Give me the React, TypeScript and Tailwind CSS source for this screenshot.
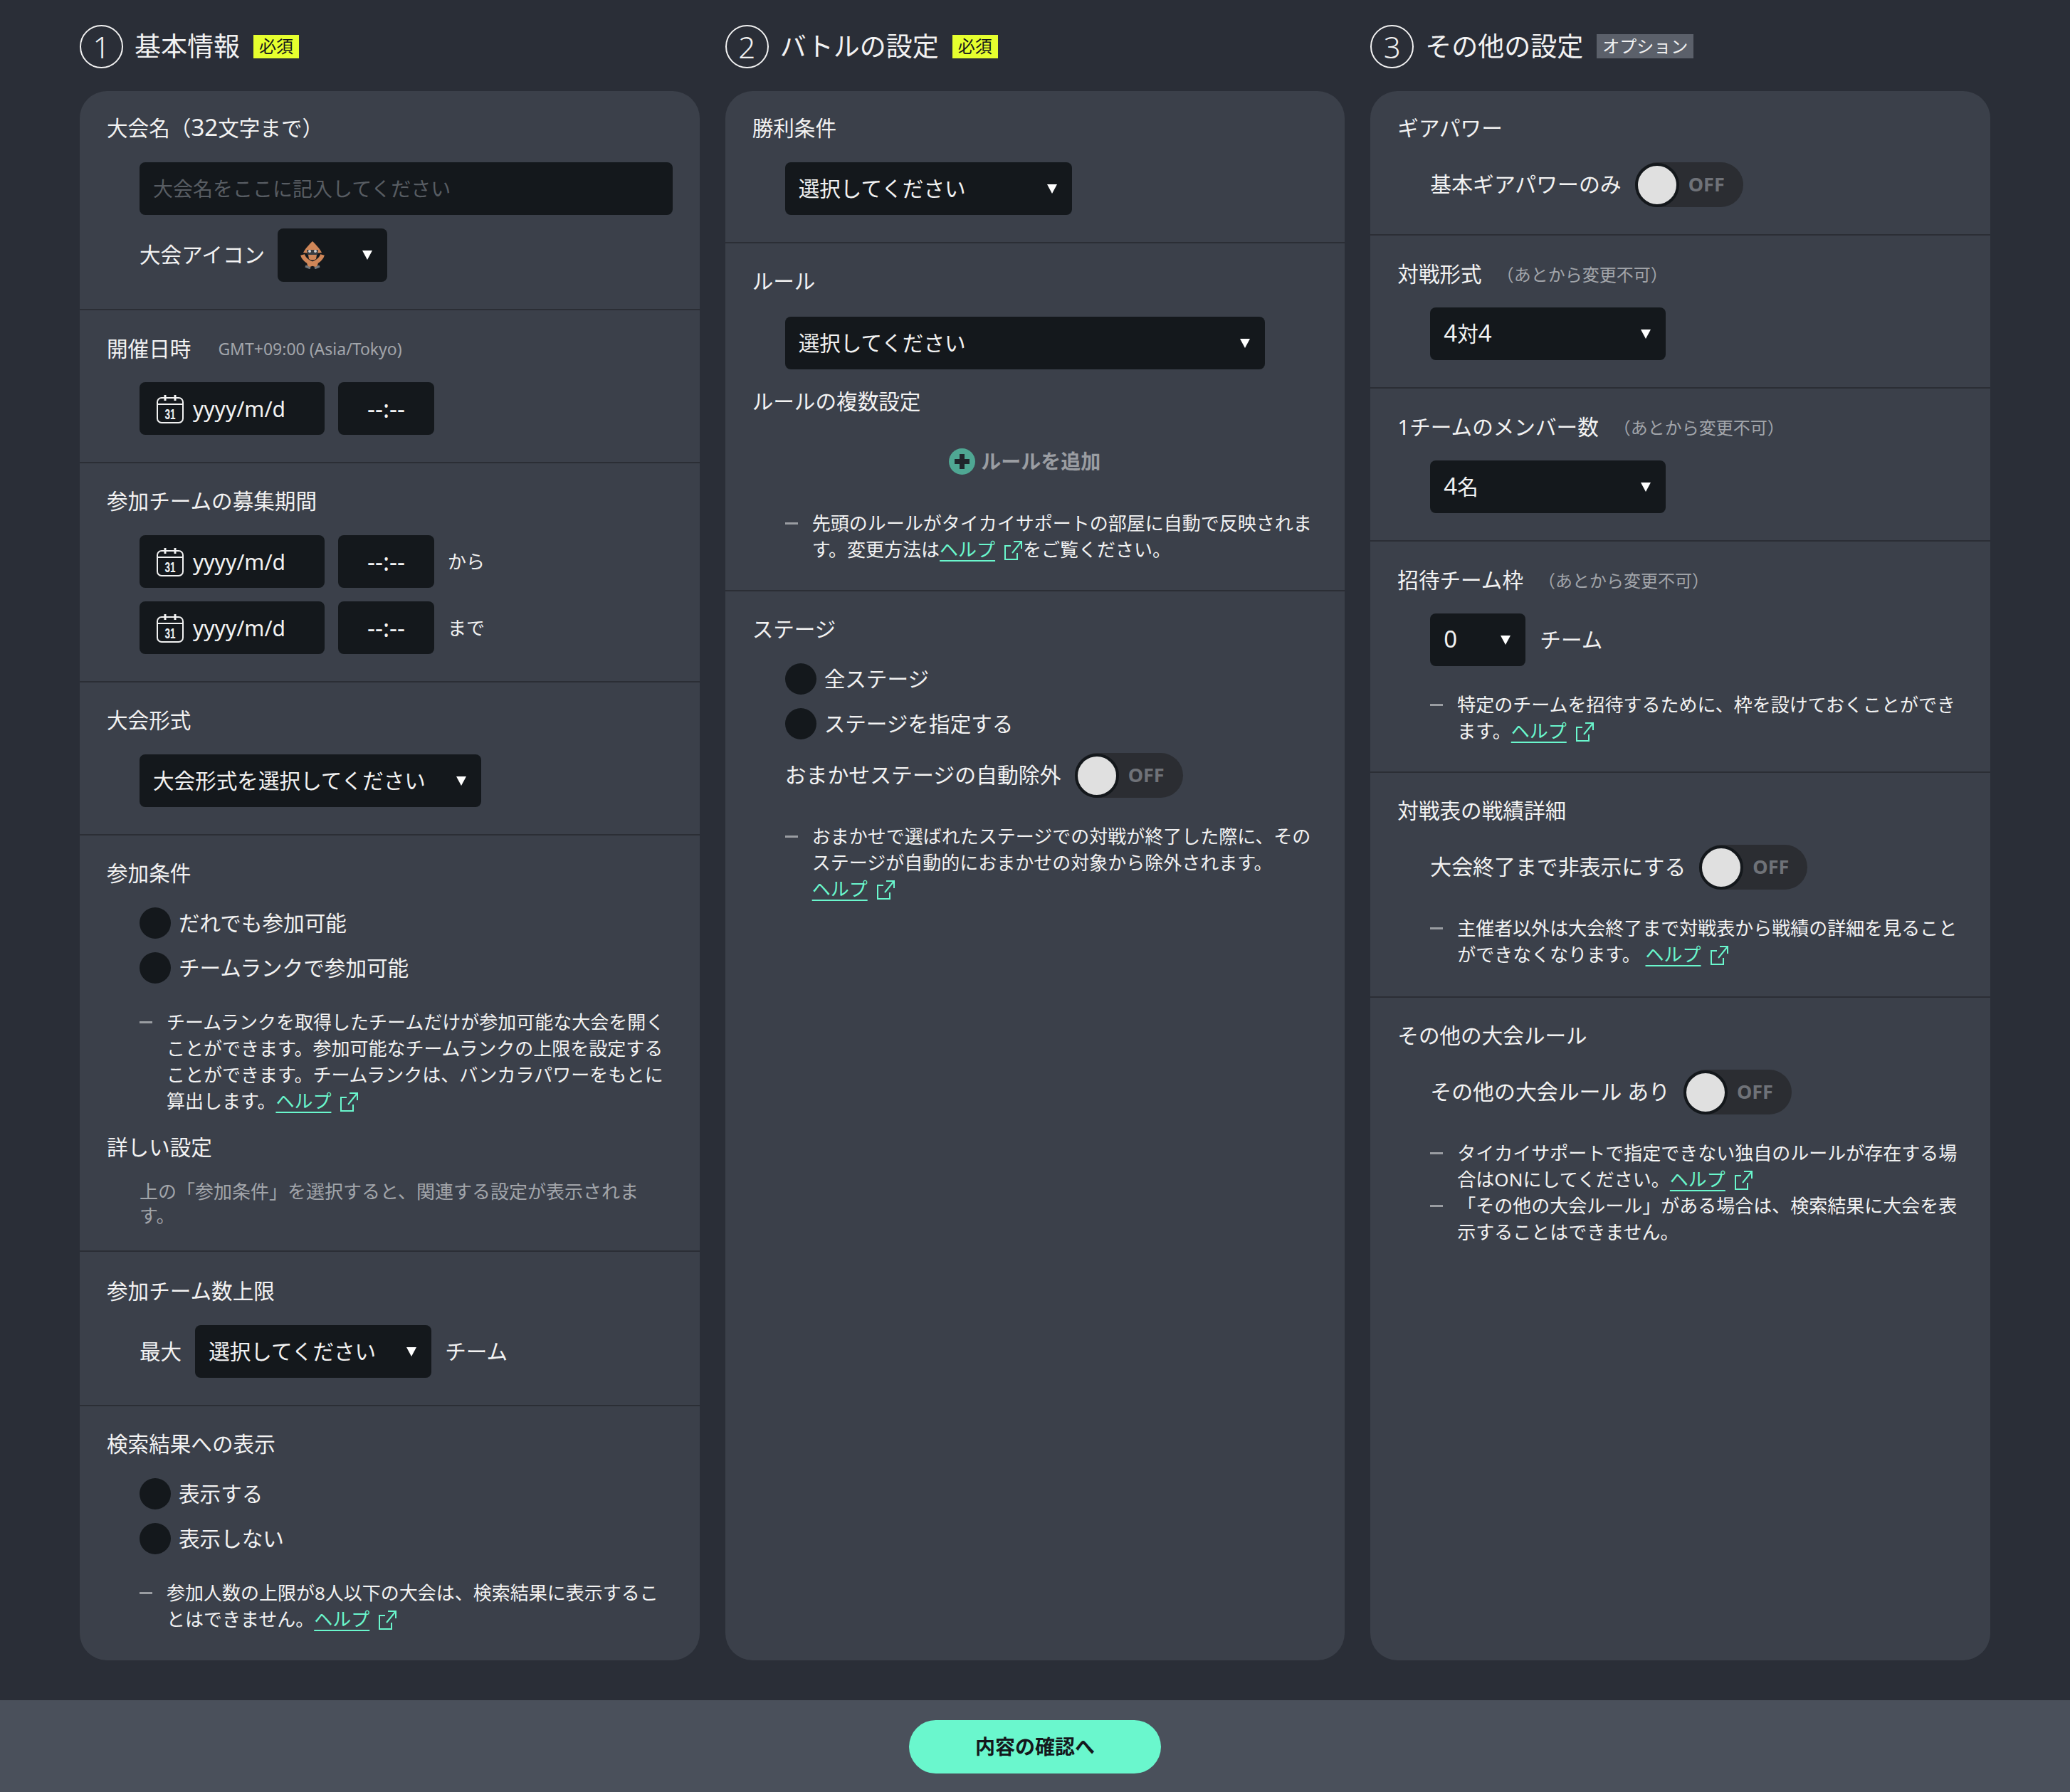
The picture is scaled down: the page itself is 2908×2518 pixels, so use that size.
import type { ReactNode } from "react";

const Heading = ({ children, sub }: { children: ReactNode; sub?: ReactNode }) => (
  <div className={`flex h-[48px] items-center text-[29.6px] text-[#f2f2f2] ${sub ? "pt-[3px]" : ""}`}>
    <span>{children}</span>
    {sub}
  </div>
);

const Fixed = () => <span className="ml-[21px] text-[24px] text-[#a2a5aa]">（あとから変更不可）</span>;

const Section = ({ children, className = "pb-[38px]" }: { children: ReactNode; className?: string }) => (
  <section className={`border-b-2 border-[#2b2e35] pl-[38px] pr-[38px] pt-[29px] first:pt-[28px] last:border-b-0 ${className}`}>
    {children}
  </section>
);

const Body = ({ children }: { children: ReactNode }) => (
  <div className="ml-[46px] mt-[24px] flex flex-col items-start gap-[19px]">{children}</div>
);

const Arrow = () => (
  <svg width="14" height="13" viewBox="0 0 14 13" className="shrink-0">
    <polygon points="0,0 14,0 7,13" fill="#ffffff" />
  </svg>
);

const Num = ({ children }: { children: ReactNode }) => <span className="text-[33px] leading-none">{children}</span>;

const Select = ({ label, width }: { label: ReactNode; width: string }) => (
  <div className={`flex h-[74px] items-center justify-between rounded-[8px] bg-[#14181c] pl-[19px] pr-[21px] text-[29.6px] text-[#f2f2f2] ${width}`}>
    <span>{label}</span>
    <Arrow />
  </div>
);

const Squid = () => (
  <svg width="34" height="39" viewBox="0 0 34 39" fill="none">
    <path d="M3 19 Q6 29 24 34" stroke="#cf8658" strokeWidth="6" />
    <path d="M31 19 Q28 29 10 34" stroke="#cf8658" strokeWidth="6" />
    <path d="M7 35 L14 38 M27 35 L20 38" stroke="#74777c" strokeWidth="3" />
    <path d="M17 0 C21 4 27 10 30 16 L21 17 L13 17 L4 16 C7 10 13 4 17 0 Z" fill="#cf8658" />
    <path d="M9 12 H25 L24 19 H10 Z" fill="#3a3d42" />
    <circle cx="13" cy="14" r="2" fill="#cfd1d4" />
    <circle cx="21" cy="14" r="2" fill="#cfd1d4" />
    <path d="M11 19 H23 L22 25 Q17 28 12 25 Z" fill="#cf8658" />
  </svg>
);

const IconSelect = () => (
  <div className="flex items-center gap-[18px]">
    <span className="text-[29.6px] text-[#f2f2f2]">大会アイコン</span>
    <div className="flex h-[75px] w-[154px] items-center justify-between rounded-[8px] bg-[#14181c] pl-[32px] pr-[21px]">
      <Squid />
      <Arrow />
    </div>
  </div>
);

const Calendar = () => (
  <svg width="38" height="41" viewBox="0 0 38 41" fill="none" stroke="#f2f2f2" strokeWidth="2">
    <rect x="1" y="5" width="36" height="35" rx="6" />
    <path d="M1 14 H37" />
    <path d="M12 1 V9 M26 1 V9" strokeWidth="3" />
    <text x="19" y="35" textAnchor="middle" textLength="15" lengthAdjust="spacingAndGlyphs" fill="#f2f2f2" stroke="none" fontSize="20" fontWeight="700" fontFamily="Liberation Sans, sans-serif">31</text>
  </svg>
);

const DateTime = ({ suffix }: { suffix?: string }) => (
  <div className="flex items-center gap-[19px]">
    <div className="flex h-[74px] w-[260px] items-center gap-[13px] rounded-[8px] bg-[#14181c] pl-[24px] text-[30px] text-[#f2f2f2]">
      <Calendar />
      <span>yyyy/m/d</span>
    </div>
    <div className="flex h-[74px] w-[135px] items-center justify-center rounded-[8px] bg-[#14181c] text-[34px] text-[#f2f2f2]">--:--</div>
    {suffix && <span className="text-[26px] text-[#f2f2f2]">{suffix}</span>}
  </div>
);

const Radio = ({ label }: { label: string }) => (
  <div className="flex h-[44px] items-center gap-[11px] text-[29.6px] text-[#f2f2f2]">
    <span className="h-[44px] w-[44px] rounded-full bg-[#14181c]" />
    <span>{label}</span>
  </div>
);

const Toggle = ({ label }: { label: string }) => (
  <div className="flex items-center gap-[19px]">
    <span className="text-[29.9px] text-[#f2f2f2]">{label}</span>
    <div className="flex h-[63px] w-[152px] items-center rounded-full bg-[#2b2d32]">
      <span className="h-[62px] w-[62px] rounded-full border-[4px] border-[#14181c] bg-[#e0e0e0]" />
      <span className="ml-[13px] text-[27px] font-bold text-[#6f7278]">OFF</span>
    </div>
  </div>
);

const Help = () => (
  <span className="whitespace-nowrap">
    <a className="text-[#6af7cd] underline underline-offset-[5px]">ヘルプ</a>
    <svg width="25" height="27" viewBox="-1 -1 25 27" fill="none" stroke="#6af7cd" strokeWidth="2" className="ml-[13px] mr-[1px] inline align-[-5px]">
      <path d="M8 6 H0 V25 H17 V16" />
      <path d="M10 16 L23 0 M12 0 H23 V10" />
    </svg>
  </span>
);

const Notes = ({ items }: { items: ReactNode[] }) => (
  <ul className="mt-[17px] w-full">
    {items.map((item, i) => (
      <li key={i} className="flex text-[26px] leading-[37px] text-[#f2f2f2]">
        <span className="mr-[20px] mt-[17px] h-[3px] w-[18px] shrink-0 bg-[#9a9da2]" />
        <p>{item}</p>
      </li>
    ))}
  </ul>
);

const Title = ({ n, title, badge }: { n: number; title: string; badge: ReactNode }) => (
  <div className="mb-[32px] flex h-[62px] items-center text-[#f2f2f2]">
    <span className="flex h-[61px] w-[61px] items-center justify-center rounded-full border-2 border-[#f2f2f2] text-[42px] font-light">{n}</span>
    <h2 className="ml-[16px] mr-[19px] text-[37px] font-normal">{title}</h2>
    {badge}
  </div>
);

const Required = () => (
  <span className="flex h-[33px] w-[64px] items-center justify-center bg-[#e6ff2e] text-[24px] text-[#14181c]">必須</span>
);

const Optional = () => (
  <span className="flex h-[34px] w-[136px] items-center justify-center bg-[#5b606a] text-[24px] text-[#f2f2f2]">オプション</span>
);

const Card = ({ children }: { children: ReactNode }) => (
  <div className="flex-1 overflow-hidden rounded-[38px] bg-[#3b404a]">{children}</div>
);

export default function App() {
  return (
    <div lang="ja" className="font-['Noto_Sans','Noto_Sans_CJK_JP',sans-serif]">
      <main className="bg-[#2a2e37] px-[112px] pb-[56px] pt-[34px]">
        <div className="flex gap-[36px]">
          <div className="flex flex-1 flex-col">
            <Title n={1} title="基本情報" badge={<Required />} />
            <Card>
              <Section>
                <Heading>
                  大会名（<Num>32</Num>文字まで）
                </Heading>
                <Body>
                  <div className="flex h-[74px] w-full items-center rounded-[8px] bg-[#14181c] px-[19px] text-[28px] text-[#585d63]">大会名をここに記入してください</div>
                  <IconSelect />
                </Body>
              </Section>
              <Section>
                <Heading sub={<span className="ml-[38px] text-[23px] text-[#a2a5aa]">GMT+09:00 (Asia/Tokyo)</span>}>開催日時</Heading>
                <Body>
                  <DateTime />
                </Body>
              </Section>
              <Section>
                <Heading>参加チームの募集期間</Heading>
                <Body>
                  <DateTime suffix="から" />
                  <DateTime suffix="まで" />
                </Body>
              </Section>
              <Section>
                <Heading>大会形式</Heading>
                <Body>
                  <Select label="大会形式を選択してください" width="w-[480px]" />
                </Body>
              </Section>
              <Section className="pb-[32px]">
                <Heading>参加条件</Heading>
                <Body>
                  <Radio label="だれでも参加可能" />
                  <Radio label="チームランクで参加可能" />
                  <Notes
                    items={[
                      <>
                        チームランクを取得したチームだけが参加可能な大会を開くことができます。参加可能なチームランクの上限を設定することができます。チームランクは、バンカラパワーをもとに算出します。
                        <Help />
                      </>,
                    ]}
                  />
                </Body>
                <div className="mt-[22px]">
                  <Heading>詳しい設定</Heading>
                </div>
                <p className="ml-[46px] mt-[21px] text-[26px] leading-[34px] text-[#a2a5aa]">上の「参加条件」を選択すると、関連する設定が表示されます。</p>
              </Section>
              <Section>
                <div className="pt-[2px]">
                  <Heading>参加チーム数上限</Heading>
                </div>
                <Body>
                  <div className="flex items-center gap-[19px] text-[29.6px] text-[#f2f2f2]">
                    <span>最大</span>
                    <Select label="選択してください" width="w-[332px]" />
                    <span>チーム</span>
                  </div>
                </Body>
              </Section>
              <Section className="pb-[39px]">
                <Heading>検索結果への表示</Heading>
                <Body>
                  <Radio label="表示する" />
                  <Radio label="表示しない" />
                  <Notes
                    items={[
                      <>
                        参加人数の上限が8人以下の大会は、検索結果に表示することはできません。
                        <Help />
                      </>,
                    ]}
                  />
                </Body>
              </Section>
            </Card>
          </div>

          <div className="flex flex-1 flex-col">
            <Title n={2} title="バトルの設定" badge={<Required />} />
            <Card>
              <Section>
                <Heading>勝利条件</Heading>
                <Body>
                  <Select label="選択してください" width="w-[403px]" />
                </Body>
              </Section>
              <Section>
                <Heading>ルール</Heading>
                <div className="pt-[2px]">
                  <Body>
                    <Select label="選択してください" width="w-[674px]" />
                  </Body>
                </div>
                <div className="mt-[21px]">
                  <Heading>ルールの複数設定</Heading>
                </div>
                <div className="ml-[46px] mt-[39px] flex w-[674px] items-center justify-center gap-[8px]">
                  <svg width="37" height="37" viewBox="0 0 37 37">
                    <circle cx="18.5" cy="18.5" r="18.5" fill="#4fa793" />
                    <path d="M18.5 8 V29 M8 18.5 H29" stroke="#20252b" strokeWidth="7" />
                  </svg>
                  <span className="text-[28px] font-bold text-[#9a9da2]">ルールを追加</span>
                </div>
                <div className="ml-[46px] mt-[48px]">
                  <Notes
                    items={[
                      <>
                        先頭のルールがタイカイサポートの部屋に自動で反映されます。変更方法は
                        <Help />
                        をご覧ください。
                      </>,
                    ]}
                  />
                </div>
              </Section>
              <Section>
                <Heading>ステージ</Heading>
                <Body>
                  <Radio label="全ステージ" />
                  <Radio label="ステージを指定する" />
                  <Toggle label="おまかせステージの自動除外" />
                  <Notes
                    items={[
                      <>
                        おまかせで選ばれたステージでの対戦が終了した際に、そのステージが自動的におまかせの対象から除外されます。
                        <Help />
                      </>,
                    ]}
                  />
                </Body>
              </Section>
            </Card>
          </div>

          <div className="flex flex-1 flex-col">
            <Title n={3} title="その他の設定" badge={<Optional />} />
            <Card>
              <Section>
                <Heading>ギアパワー</Heading>
                <Body>
                  <Toggle label="基本ギアパワーのみ" />
                </Body>
              </Section>
              <Section>
                <Heading sub={<Fixed />}>対戦形式</Heading>
                <Body>
                  <Select
                    label={
                      <>
                        <Num>4</Num>対<Num>4</Num>
                      </>
                    }
                    width="w-[331px]"
                  />
                </Body>
              </Section>
              <Section>
                <Heading sub={<Fixed />}>1チームのメンバー数</Heading>
                <Body>
                  <Select
                    label={
                      <>
                        <Num>4</Num>名
                      </>
                    }
                    width="w-[331px]"
                  />
                </Body>
              </Section>
              <Section>
                <Heading sub={<Fixed />}>招待チーム枠</Heading>
                <Body>
                  <div className="flex items-center gap-[20px] text-[29.6px] text-[#f2f2f2]">
                    <Select label={<Num>0</Num>} width="w-[134px]" />
                    <span>チーム</span>
                  </div>
                  <Notes
                    items={[
                      <>
                        特定のチームを招待するために、枠を設けておくことができます。
                        <Help />
                      </>,
                    ]}
                  />
                </Body>
              </Section>
              <Section className="pb-[40px]">
                <Heading>対戦表の戦績詳細</Heading>
                <Body>
                  <Toggle label="大会終了まで非表示にする" />
                  <Notes
                    items={[
                      <>
                        主催者以外は大会終了まで対戦表から戦績の詳細を見ることができなくなります。 <Help />
                      </>,
                    ]}
                  />
                </Body>
              </Section>
              <Section>
                <Heading>その他の大会ルール</Heading>
                <Body>
                  <Toggle label="その他の大会ルール あり" />
                  <Notes
                    items={[
                      <>
                        タイカイサポートで指定できない独自のルールが存在する場合はONにしてください。
                        <Help />
                      </>,
                      "「その他の大会ルール」がある場合は、検索結果に大会を表示することはできません。",
                    ]}
                  />
                </Body>
              </Section>
            </Card>
          </div>
        </div>
      </main>
      <footer className="flex h-[130px] items-center justify-center bg-[#4a505b]">
        <button className="h-[75px] w-[354px] rounded-full bg-[#6af7cd] text-[28px] font-bold text-[#14181c]">内容の確認へ</button>
      </footer>
    </div>
  );
}
